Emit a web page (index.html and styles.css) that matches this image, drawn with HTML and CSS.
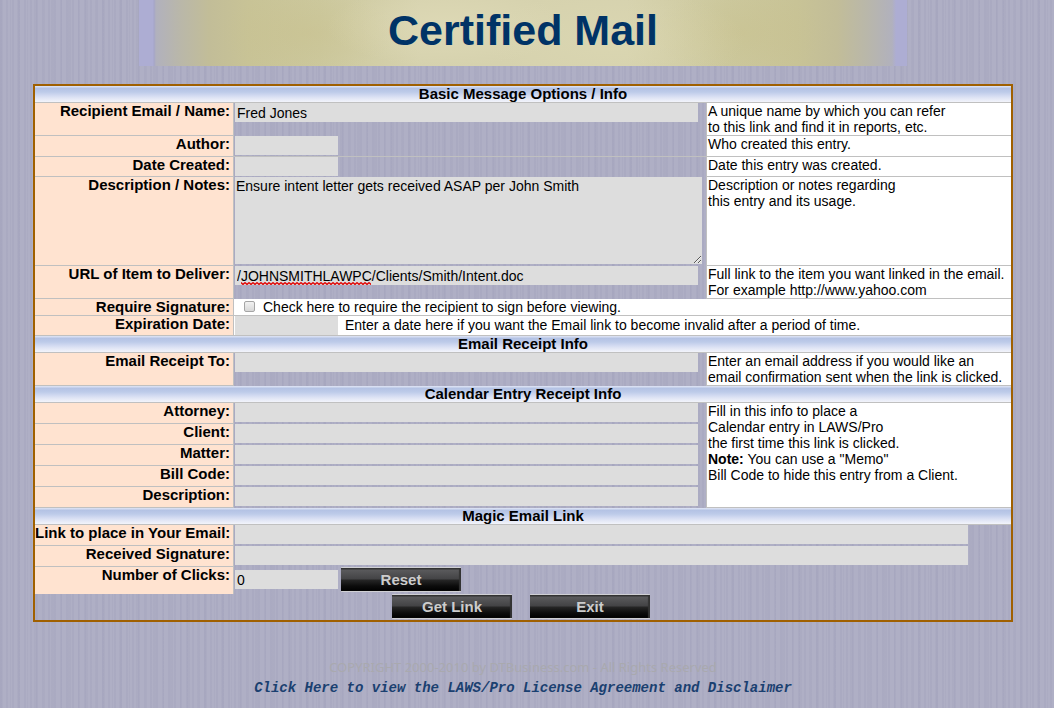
FILE: index.html
```html
<!DOCTYPE html>
<html lang="en">

<head>
    <meta charset="UTF-8">
    <meta name="viewport" content="width=device-width, initial-scale=1.0">
    <title>Certified Mail</title>
    <link rel="stylesheet" href="styles.css">
</head>

<body>
    <header class="banner">
        <h1>Certified Mail</h1>
    </header>

    <form class="mail-form">
        <!-- Basic options -->
        <h2>Basic Message Options / Info</h2>
        <div class="row tall">
            <label for="recipient">Recipient Email / Name:</label>
            <div class="field"><input type="text" id="recipient" value="Fred Jones"></div>
            <p class="help">A unique name by which you can refer<br>to this link and find it in reports, etc.</p>
        </div>
        <div class="row ruled">
            <label for="author">Author:</label>
            <div class="field"><input type="text" id="author" class="short"></div>
            <p class="help">Who created this entry.</p>
        </div>
        <div class="row compact">
            <label for="created">Date Created:</label>
            <div class="field"><input type="text" id="created" class="short"></div>
            <p class="help">Date this entry was created.</p>
        </div>
        <div class="row notes-row">
            <label for="notes">Description / Notes:</label>
            <div class="field"><textarea id="notes">Ensure intent letter gets received ASAP per John Smith</textarea></div>
            <p class="help">Description or notes regarding<br>this entry and its usage.</p>
        </div>
        <div class="row tall">
            <label for="url">URL of Item to Deliver:</label>
            <div class="field"><input type="text" id="url" class="misspelled" value="/JOHNSMITHLAWPC/Clients/Smith/Intent.doc"></div>
            <p class="help">Full link to the item you want linked in the email.<br>For example http://www.yahoo.com</p>
        </div>
        <div class="row wide white check-row">
            <label for="signature">Require Signature:</label>
            <div class="field">
                <input type="checkbox" id="signature">
                <span>Check here to require the recipient to sign before viewing.</span>
            </div>
        </div>
        <div class="row wide white compact">
            <label for="expires">Expiration Date:</label>
            <div class="field">
                <input type="text" id="expires" class="short">
                <span class="hint">Enter a date here if you want the Email link to become invalid after a period of time.</span>
            </div>
        </div>

        <!-- Email receipt -->
        <h2>Email Receipt Info</h2>
        <div class="row tall">
            <label for="receipt">Email Receipt To:</label>
            <div class="field"><input type="text" id="receipt"></div>
            <p class="help">Enter an email address if you would like an<br>email confirmation sent when the link is clicked.</p>
        </div>

        <!-- Calendar entry -->
        <h2>Calendar Entry Receipt Info</h2>
        <div class="calendar">
            <div class="calendar-rows">
                <div class="row pair">
                    <label for="attorney">Attorney:</label>
                    <div class="field"><input type="text" id="attorney"></div>
                </div>
                <div class="row pair">
                    <label for="client">Client:</label>
                    <div class="field"><input type="text" id="client"></div>
                </div>
                <div class="row pair">
                    <label for="matter">Matter:</label>
                    <div class="field"><input type="text" id="matter"></div>
                </div>
                <div class="row pair">
                    <label for="billcode">Bill Code:</label>
                    <div class="field"><input type="text" id="billcode"></div>
                </div>
                <div class="row pair">
                    <label for="description">Description:</label>
                    <div class="field"><input type="text" id="description"></div>
                </div>
            </div>
            <p class="help">Fill in this info to place a<br>Calendar entry in LAWS/Pro<br>the first time this link is clicked.<br><b>Note:</b> You can use a "Memo"<br>Bill Code to hide this entry from a Client.</p>
        </div>

        <!-- Magic link -->
        <h2>Magic Email Link</h2>
        <div class="row wide">
            <label for="link">Link to place in Your Email:</label>
            <div class="field"><input type="text" id="link" class="long"></div>
        </div>
        <div class="row wide">
            <label for="received">Received Signature:</label>
            <div class="field"><input type="text" id="received" class="long"></div>
        </div>
        <div class="row wide clicks">
            <label for="clicks">Number of Clicks:</label>
            <div class="field">
                <input type="text" id="clicks" class="short" value="0">
                <button type="button">Reset</button>
            </div>
        </div>
        <div class="actions">
            <button type="button">Get Link</button>
            <button type="button">Exit</button>
        </div>
    </form>

    <footer>
        <p class="copyright">COPYRIGHT 2000-2010 by DTBusiness.com - All Rights Reserved</p>
        <a href="#">Click Here to view the LAWS/Pro License Agreement and Disclaimer</a>
    </footer>
</body>

</html>
```
FILE: styles.css
```css
* {
    box-sizing: border-box;
}

body {
    margin: 0 8px 0 0;
    font-family: "Liberation Sans", Arial, sans-serif;
    font-size: 14px;
    line-height: 16px;
    color: #000;
}

/* brushed vertical stripes */
html {
    background:
        repeating-linear-gradient(90deg, rgba(150, 150, 180, .18) 0 2px, transparent 2px 6px),
        repeating-linear-gradient(90deg, rgba(150, 150, 180, .16) 0 3px, transparent 3px 10px, rgba(150, 150, 180, .16) 10px 11px, transparent 11px 17px),
        #afafc5;
}

h1, h2, p {
    margin: 0;
}

.banner {
    max-width: 768px;
    height: 66px;
    margin: 0 auto 18px;
    text-align: center;
    background:
        radial-gradient(ellipse 120px 40px at 40% 40%, rgba(226, 221, 186, .6), transparent),
        radial-gradient(ellipse 130px 50px at 62% 60%, rgba(222, 218, 180, .5), transparent),
        radial-gradient(ellipse 90px 40px at 22% 50%, rgba(200, 192, 140, .4), transparent),
        radial-gradient(ellipse 90px 40px at 78% 50%, rgba(200, 192, 140, .4), transparent),
        linear-gradient(90deg, #adadd3 0 14px, #a5a5c8 15px, #b1b1bd 17px, #b9b7aa 40px, #c2bd98 70px, #c8c396 110px, #ccc89d 180px, #d6d2ae 280px, #d6d2ae calc(100% - 280px), #ccc89d calc(100% - 180px), #c8c396 calc(100% - 110px), #c2bd98 calc(100% - 70px), #b9b7aa calc(100% - 40px), #b1b1bd calc(100% - 15px), #adadd3 calc(100% - 11px));
}

h1 {
    font-size: 43px;
    line-height: 60px;
    color: #036;
}

.mail-form {
    max-width: 980px;
    margin: 0 auto;
    border: 2px solid #a06000;
}

h2 {
    height: 17px;
    font-size: 15px;
    line-height: 16px;
    text-align: center;
    border-bottom: 1px solid #c0c0c0;
    background: linear-gradient(#d8dff2 0 1px, #b3c2e4 2px, #bdcbe9 6px, #cfd8f0 9px, #e0e5f5 12px, #f2f4fb 16px);
}

.row {
    display: grid;
    grid-template-columns: 199px 1fr 305px;
    min-height: 21px;
}

.row.wide,
.row.pair {
    grid-template-columns: 199px 1fr;
}

.row.compact {
    min-height: 20px;
}

.row.tall {
    min-height: 33px;
}

.row.notes-row {
    min-height: 89px;
}

.row label {
    padding-right: 3px;
    font-size: 15px;
    font-weight: bold;
    text-align: right;
    white-space: nowrap;
    background: #ffe3d0;
    border-right: 1px solid #c0c0c0;
    border-bottom: 1px solid #c0c0c0;
}

.field {
    padding-left: 1px;
}

.ruled .field {
    border-bottom: 1px solid #c0c0c0;
}

.help {
    padding-left: 1px;
    white-space: nowrap;
    background: #fff;
    border-left: 1px solid #c0c0c0;
    border-bottom: 1px solid #c0c0c0;
}

.white .field {
    display: flex;
    background: #fff;
    border-bottom: 1px solid #c0c0c0;
}

input[type="text"],
textarea {
    display: block;
    width: 463px;
    max-width: 100%;
    height: 19px;
    padding: 0 2px;
    border: 0;
    border-radius: 0;
    font: inherit;
    background: #ddd;
}

input.short {
    width: 103px;
}

input.long {
    width: 733px;
}

textarea {
    width: 467px;
    height: 87px;
    padding: 1px;
}

/* spell check underline */
input.misspelled {
    background: #ddd url("data:image/svg+xml,%3Csvg xmlns='http://www.w3.org/2000/svg' width='130' height='3'%3E%3Cdefs%3E%3Cpattern id='w' width='4' height='3' patternUnits='userSpaceOnUse'%3E%3Cpath d='M0 .5L2 2.5L4 .5' fill='none' stroke='%23e00000' stroke-width='1.3'/%3E%3C/pattern%3E%3C/defs%3E%3Crect width='130' height='3' fill='url(%23w)'/%3E%3C/svg%3E") no-repeat 6px 16px;
}

.row.check-row {
    min-height: 17px;
}

input[type="checkbox"] {
    appearance: none;
    width: 11px;
    height: 11px;
    margin: 2px 8px 0 9px;
    border: 1px solid #a5a5a5;
    border-radius: 2px;
    background: linear-gradient(#f2f2f2, #d8d8d8);
}

.hint {
    padding: 1px 0 0 7px;
}

.calendar {
    display: grid;
    grid-template-columns: 1fr 305px;
}

.row.clicks {
    min-height: 27px;
}

.clicks label {
    border-bottom: 0;
}

.clicks .field {
    display: flex;
    align-items: center;
    gap: 3px;
    padding-bottom: 2px;
}

button {
    width: 120px;
    height: 25px;
    padding: 0;
    border: solid #d0d0d4;
    border-width: 1px 0;
    border-radius: 1px;
    font: bold 15px/16px "Liberation Sans", Arial, sans-serif;
    color: #ccc;
    background: linear-gradient(#333 0 1px, #5a5a5c 2px, #434345 11px, #262626 12px, #0c0c0c 18px, #000);
    box-shadow: inset -2px 0 1px #333;
}

.actions {
    display: flex;
    justify-content: center;
    gap: 18px;
    height: 26px;
    padding-right: 4px;
}

footer {
    margin-top: 37px;
    text-align: center;
}

.copyright {
    font: 13px/16px "Noto Sans", sans-serif;
    color: #a9a9ae;
}

footer a {
    display: block;
    margin-top: 5px;
    font: italic bold 14px/16px "Liberation Mono", "Courier New", monospace;
    color: #1a4070;
    text-decoration: none;
}
```
